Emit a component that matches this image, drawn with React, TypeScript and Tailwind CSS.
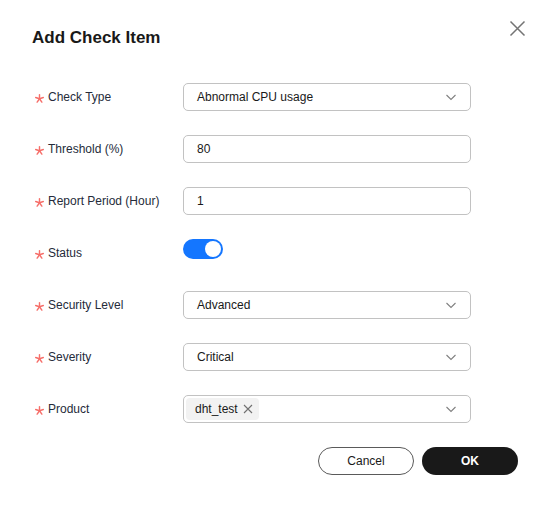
import React from "react";

const Chevron = () => (
  <svg width="12" height="12" viewBox="0 0 12 12" className="shrink-0">
    <path d="M1.5 4 L6 8.5 L10.5 4" fill="none" stroke="#808080" strokeWidth="1.1" />
  </svg>
);

const Star = () => (
  <svg width="9" height="9" viewBox="0 0 10 10" className="shrink-0 mr-[4px] translate-y-[1px]">
    <g stroke="#f66f6a" strokeWidth="1.6" strokeLinecap="round">
      <line x1="5" y1="5.3" x2="5" y2="0.8" />
      <line x1="5" y1="5.3" x2="9.2" y2="3.9" />
      <line x1="5" y1="5.3" x2="0.8" y2="3.9" />
      <line x1="5" y1="5.3" x2="7.6" y2="9" />
      <line x1="5" y1="5.3" x2="2.4" y2="9" />
    </g>
  </svg>
);

const Label = ({ text }: { text: string }) => (
  <div className="w-[151px] shrink-0 flex items-center pl-[3px] text-[12px] text-[#252b3a]">
    <Star />
    <span>{text}</span>
  </div>
);

const Box = ({ children }: { children: React.ReactNode }) => (
  <div className="w-[288px] h-[28px] border border-[#c2c2c2] rounded-[5px] flex items-center pl-[13px] pr-[13px] text-[12px] text-[#191919]">
    {children}
  </div>
);

export default function App() {
  return (
    <div className="w-[547px] h-[505px] bg-white relative" style={{ fontFamily: '"Liberation Sans", Arial, sans-serif' }}>
      <button className="absolute left-[509px] top-[20px] w-[17px] h-[17px]">
        <svg width="17" height="17" viewBox="0 0 17 17">
          <path d="M1.5 1.5 L15.5 15.5 M15.5 1.5 L1.5 15.5" stroke="#747474" strokeWidth="1.5" fill="none" />
        </svg>
      </button>
      <div className="pl-[32px] pt-[27px]">
        <h1 className="text-[17px] font-bold text-[#191919] leading-[22px]">Add Check Item</h1>
        <div className="mt-[34px] flex flex-col gap-[24px]">
          <div className="flex items-center h-[28px]">
            <Label text="Check Type" />
            <Box>
              <span className="flex-1">Abnormal CPU usage</span>
              <Chevron />
            </Box>
          </div>
          <div className="flex items-center h-[28px]">
            <Label text="Threshold (%)" />
            <Box>
              <span className="flex-1">80</span>
            </Box>
          </div>
          <div className="flex items-center h-[28px]">
            <Label text="Report Period (Hour)" />
            <Box>
              <span className="flex-1">1</span>
            </Box>
          </div>
          <div className="flex items-center h-[28px]">
            <Label text="Status" />
            <div className="w-[40px] h-[20px] rounded-full bg-[#1476ff] flex items-center justify-end pr-[2px] -translate-y-[4px]">
              <div className="w-[16px] h-[16px] rounded-full bg-white" />
            </div>
          </div>
          <div className="flex items-center h-[28px]">
            <Label text="Security Level" />
            <Box>
              <span className="flex-1">Advanced</span>
              <Chevron />
            </Box>
          </div>
          <div className="flex items-center h-[28px]">
            <Label text="Severity" />
            <Box>
              <span className="flex-1">Critical</span>
              <Chevron />
            </Box>
          </div>
          <div className="flex items-center h-[28px]">
            <Label text="Product" />
            <div className="w-[288px] h-[28px] border border-[#c2c2c2] rounded-[5px] flex items-center pl-[2px] pr-[13px] text-[12px] text-[#191919]">
              <div className="flex-1 flex">
                <div className="h-[22px] bg-[#f2f2f2] rounded-[4px] flex items-center pl-[9px] pr-[6px] gap-[5px]">
                  <span>dht_test</span>
                  <svg width="10" height="10" viewBox="0 0 10 10">
                    <path d="M1 1 L9 9 M9 1 L1 9" stroke="#707070" strokeWidth="1.1" fill="none" />
                  </svg>
                </div>
              </div>
              <Chevron />
            </div>
          </div>
        </div>
        <div className="mt-[24px] flex justify-end gap-[8px] pr-[29px]">
          <button className="w-[96px] h-[28px] rounded-full border border-[#5a5a5a] text-[12px] text-[#191919] bg-white">Cancel</button>
          <button className="w-[96px] h-[28px] rounded-full bg-[#191919] text-[12px] font-bold text-white">OK</button>
        </div>
      </div>
    </div>
  );
}
